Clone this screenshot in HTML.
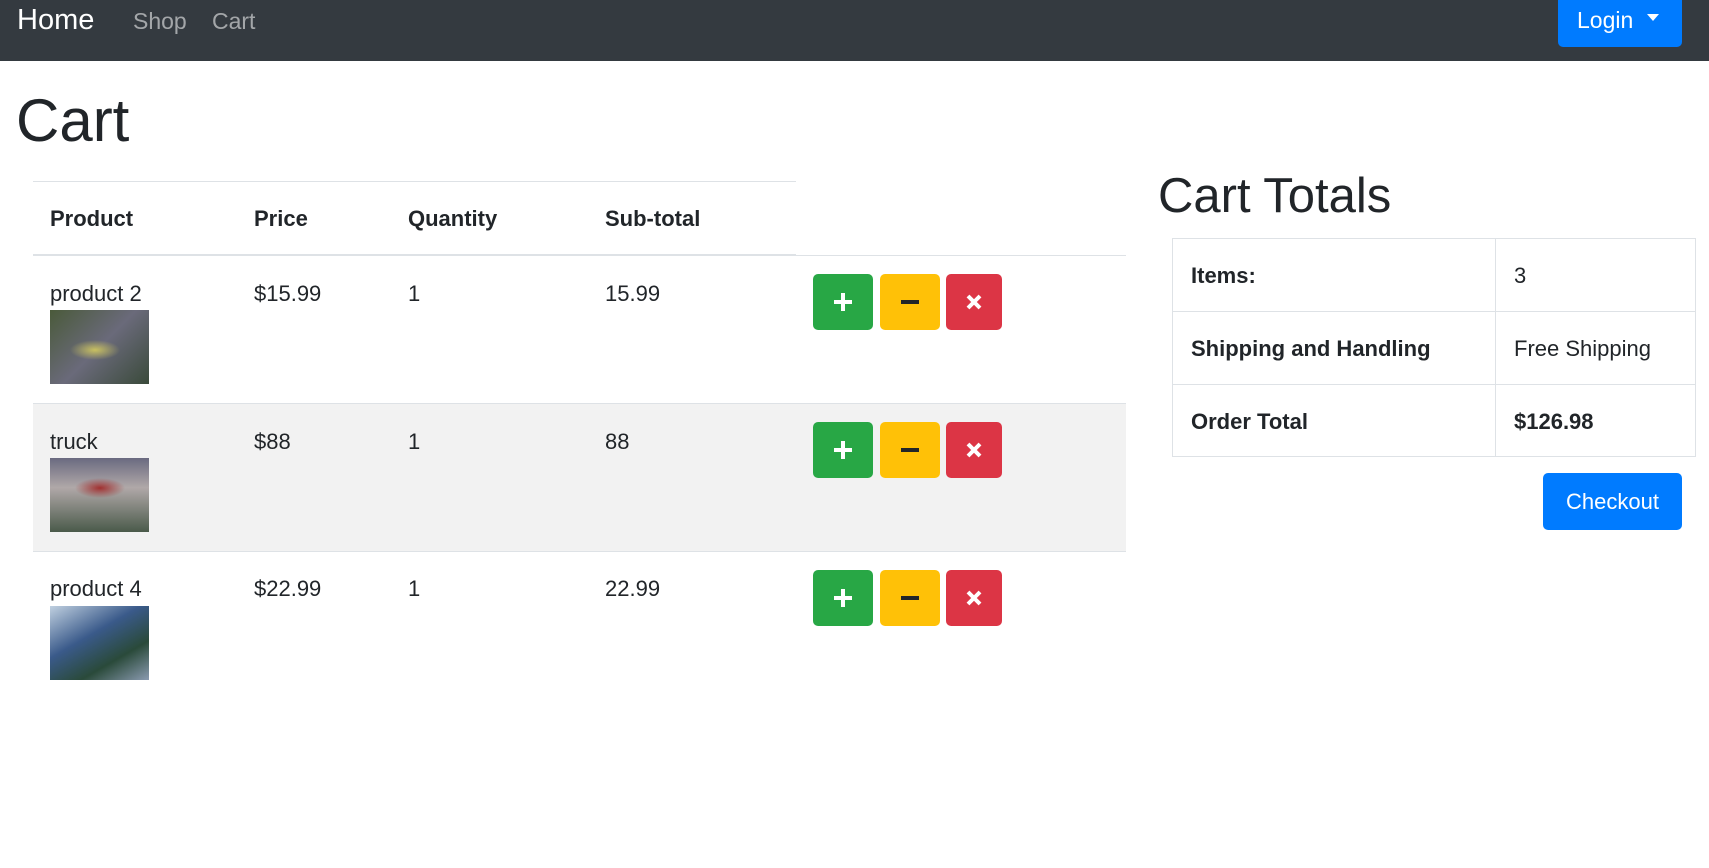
<!DOCTYPE html>
<html><head><meta charset="utf-8"><style>
*{box-sizing:border-box;margin:0;padding:0}
body{width:1709px;height:868px;overflow:hidden;background:#fff;font-family:"Liberation Sans",sans-serif;color:#212529;position:relative;font-size:22px}
.nav{position:absolute;left:0;top:0;width:1709px;height:61px;background:#343a40}
.abs{position:absolute;white-space:nowrap}
.btn{position:absolute;border-radius:5px;display:flex;align-items:center;justify-content:center}
.b{font-weight:bold}
.line{position:absolute;background:#dee2e6}
</style></head><body>
<div class="nav">
<div class="abs" style="left:17px;top:4px;font-size:29px;color:#fff">Home</div>
<div class="abs" style="left:133px;top:8px;font-size:23px;color:rgba(255,255,255,.55)">Shop</div>
<div class="abs" style="left:212px;top:8px;font-size:23px;color:rgba(255,255,255,.55)">Cart</div>
<div class="btn" style="left:1558px;top:0;width:124px;height:47px;background:#007bff;color:#fff;border-radius:0 0 5px 5px;font-size:23px;justify-content:flex-start;padding-left:19px;padding-bottom:6px">Login<span style="display:inline-block;margin-left:14px;border-left:6px solid transparent;border-right:6px solid transparent;border-top:7px solid #fff;position:relative;top:-3px"></span></div>
</div>
<div class="abs" style="left:16px;top:91px;font-size:60px;line-height:1">Cart</div>

<div class="line" style="left:33px;top:181px;width:763px;height:1px"></div>
<div class="abs b" style="left:50px;top:206px">Product</div>
<div class="abs b" style="left:254px;top:206px">Price</div>
<div class="abs b" style="left:408px;top:206px">Quantity</div>
<div class="abs b" style="left:605px;top:206px">Sub-total</div>
<div class="line" style="left:33px;top:254px;width:763px;height:2px"></div>
<div class="line" style="left:796px;top:255px;width:330px;height:1px"></div>

<div style="position:absolute;left:33px;top:403px;width:1093px;height:149px;background:#f2f2f2"></div>
<div class="line" style="left:33px;top:403px;width:1093px;height:1px"></div>
<div class="line" style="left:33px;top:551px;width:1093px;height:1px"></div>

<div class="abs" style="left:50px;top:281px">product 2</div>
<div class="abs" style="left:254px;top:281px">$15.99</div>
<div class="abs" style="left:408px;top:281px">1</div>
<div class="abs" style="left:605px;top:281px">15.99</div>
<div style="position:absolute;left:50px;top:310px;width:99px;height:74px;background:radial-gradient(ellipse 25px 10px at 45px 40px,#c8c060,transparent),linear-gradient(135deg,#4a5a3a,#6a6a7a 50%,#3a4a3a)"></div>
<div class="abs" style="left:50px;top:429px">truck</div>
<div class="abs" style="left:254px;top:429px">$88</div>
<div class="abs" style="left:408px;top:429px">1</div>
<div class="abs" style="left:605px;top:429px">88</div>
<div style="position:absolute;left:50px;top:458px;width:99px;height:74px;background:radial-gradient(ellipse 25px 10px at 50px 30px,#a03030,transparent),linear-gradient(180deg,#6a6a80,#b0a8a8 40%,#4a5a4a)"></div>
<div class="abs" style="left:50px;top:576px">product 4</div>
<div class="abs" style="left:254px;top:576px">$22.99</div>
<div class="abs" style="left:408px;top:576px">1</div>
<div class="abs" style="left:605px;top:576px">22.99</div>
<div style="position:absolute;left:50px;top:606px;width:99px;height:74px;background:linear-gradient(150deg,#c0d0e0,#3a5a8a 40%,#2a4a3a 70%,#8a9ab0)"></div>

<div class="btn" style="left:813px;top:274px;width:60px;height:56px;background:#28a745"><svg width="22" height="22"><path d="M11 2v18M2 11h18" stroke="#fff" stroke-width="4"/></svg></div>
<div class="btn" style="left:880px;top:274px;width:60px;height:56px;background:#ffc107"><svg width="22" height="22"><path d="M2 11h18" stroke="#212529" stroke-width="4"/></svg></div>
<div class="btn" style="left:946px;top:274px;width:56px;height:56px;background:#dc3545"><svg width="18" height="18"><path d="M3 3l12 12M15 3L3 15" stroke="#fff" stroke-width="4"/></svg></div>

<div class="btn" style="left:813px;top:422px;width:60px;height:56px;background:#28a745"><svg width="22" height="22"><path d="M11 2v18M2 11h18" stroke="#fff" stroke-width="4"/></svg></div>
<div class="btn" style="left:880px;top:422px;width:60px;height:56px;background:#ffc107"><svg width="22" height="22"><path d="M2 11h18" stroke="#212529" stroke-width="4"/></svg></div>
<div class="btn" style="left:946px;top:422px;width:56px;height:56px;background:#dc3545"><svg width="18" height="18"><path d="M3 3l12 12M15 3L3 15" stroke="#fff" stroke-width="4"/></svg></div>

<div class="btn" style="left:813px;top:570px;width:60px;height:56px;background:#28a745"><svg width="22" height="22"><path d="M11 2v18M2 11h18" stroke="#fff" stroke-width="4"/></svg></div>
<div class="btn" style="left:880px;top:570px;width:60px;height:56px;background:#ffc107"><svg width="22" height="22"><path d="M2 11h18" stroke="#212529" stroke-width="4"/></svg></div>
<div class="btn" style="left:946px;top:570px;width:56px;height:56px;background:#dc3545"><svg width="18" height="18"><path d="M3 3l12 12M15 3L3 15" stroke="#fff" stroke-width="4"/></svg></div>

<div class="abs" style="left:1158px;top:172px;font-size:49px;line-height:1">Cart Totals</div>
<div style="position:absolute;left:1172px;top:238px;width:524px;height:219px;border:1px solid #dee2e6"></div>
<div class="line" style="left:1495px;top:238px;width:1px;height:219px"></div>
<div class="line" style="left:1172px;top:311px;width:524px;height:1px"></div>
<div class="line" style="left:1172px;top:384px;width:524px;height:1px"></div>
<div class="abs b" style="left:1191px;top:263px">Items:</div>
<div class="abs" style="left:1514px;top:263px">3</div>
<div class="abs b" style="left:1191px;top:336px">Shipping and Handling</div>
<div class="abs" style="left:1514px;top:336px">Free Shipping</div>
<div class="abs b" style="left:1191px;top:409px">Order Total</div>
<div class="abs b" style="left:1514px;top:409px">$126.98</div>
<div class="btn" style="left:1543px;top:473px;width:139px;height:57px;background:#007bff;color:#fff;font-size:22px">Checkout</div>
</body></html>
